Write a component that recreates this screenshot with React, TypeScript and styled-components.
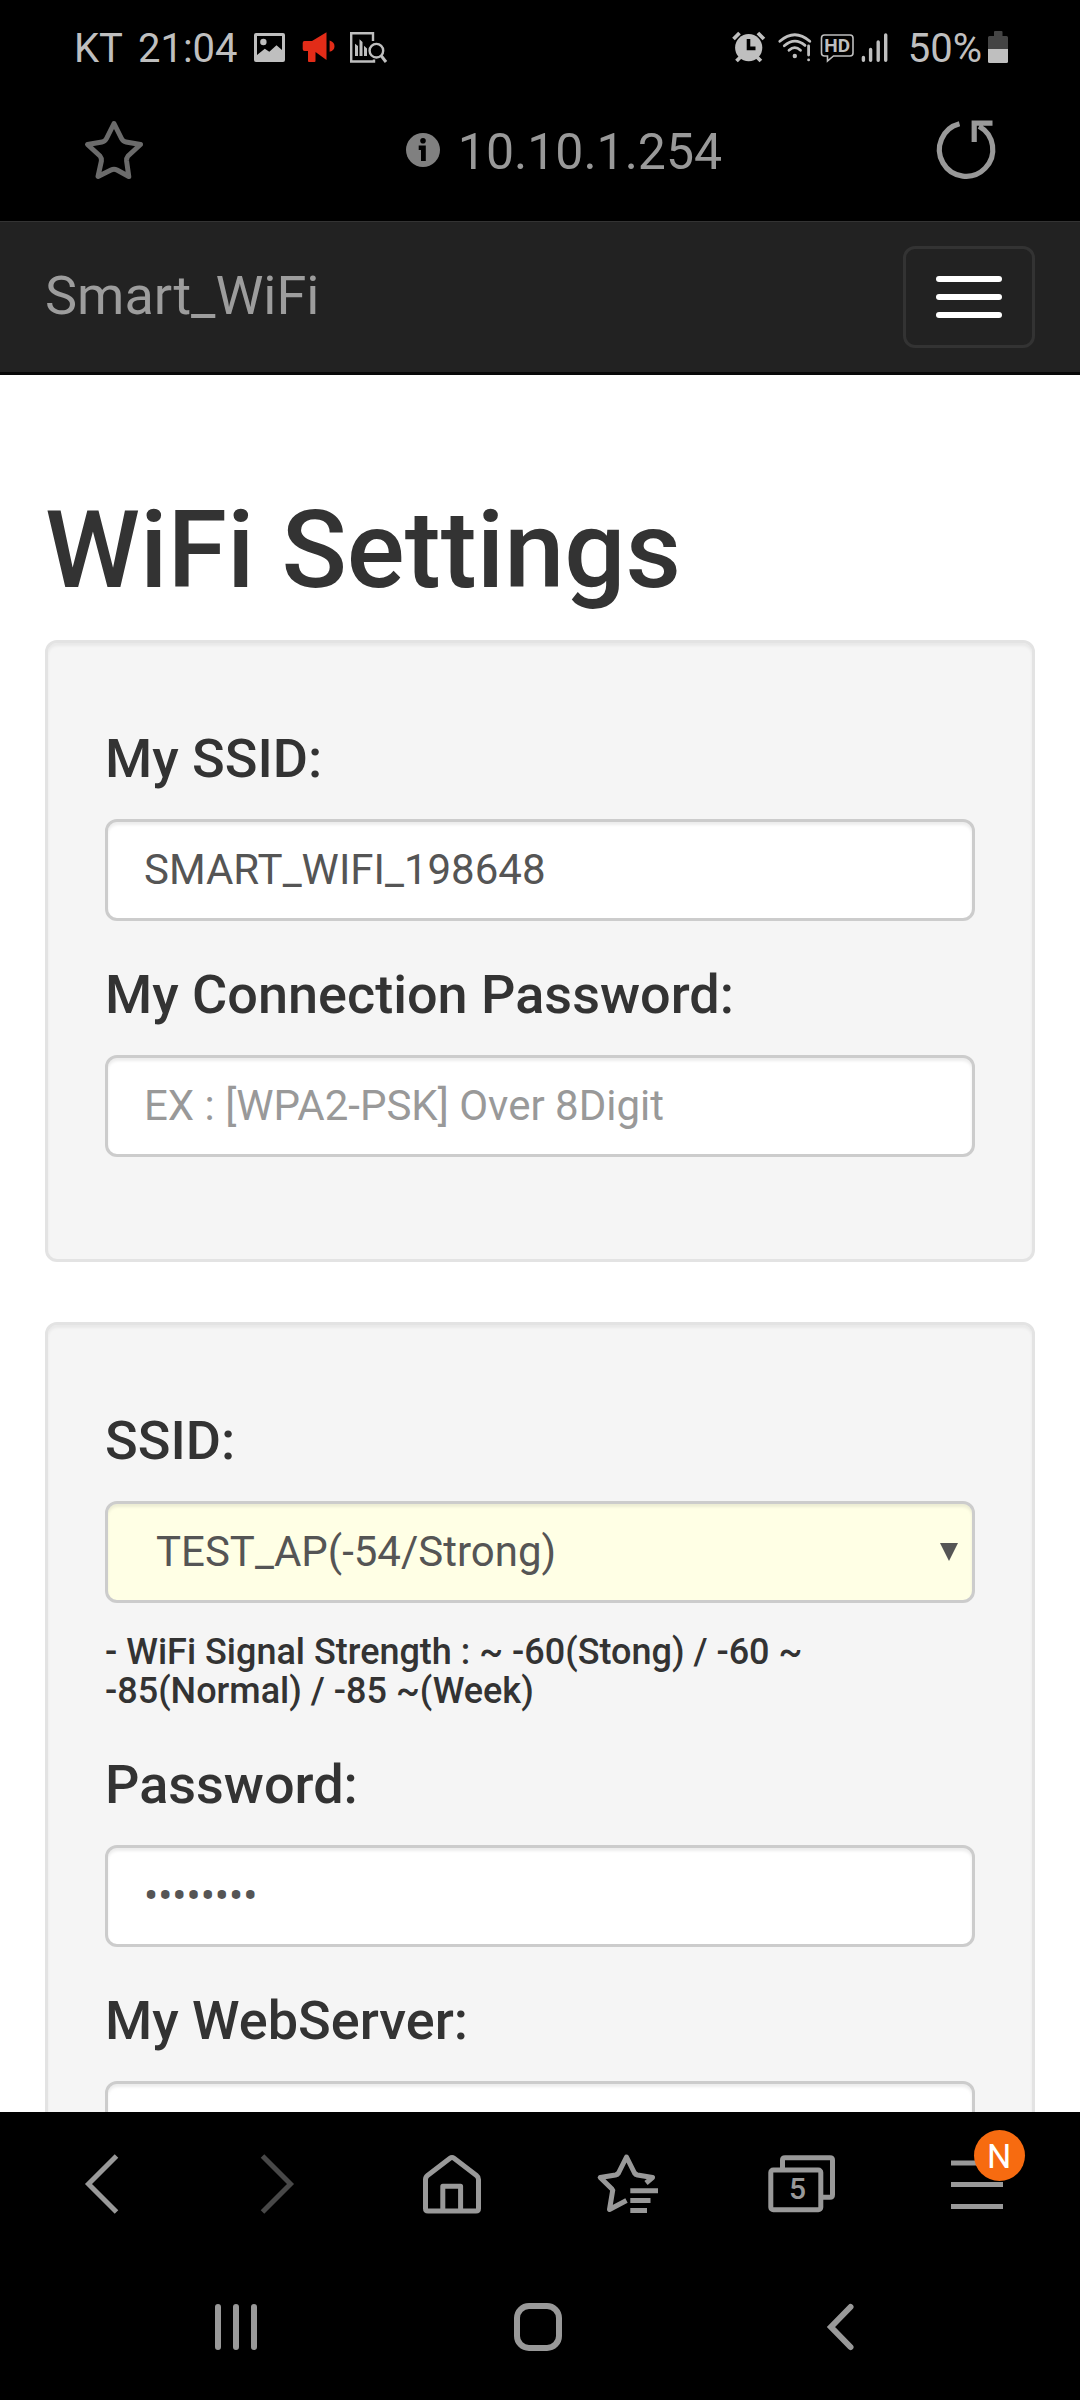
import React, { useState } from "react";
import styled, { createGlobalStyle } from "styled-components";

const GlobalStyle = createGlobalStyle`
  *, *::before, *::after { box-sizing: border-box; }
  body {
    margin: 0;
    background: #000;
    font-family: Roboto, "Noto Sans", sans-serif;
  }
  button, input, select { font-family: inherit; }
`;

const Screen = styled.div`
  display: flex;
  flex-direction: column;
  height: 100vh;
  background: #000;
`;

/* ---------- phone status bar ---------- */

const StatusBar = styled.header`
  display: flex;
  flex: none;
  justify-content: space-between;
  align-items: center;
  height: 94px;
  padding: 0 72px 0 74px;
  color: #bfbfbf;
`;

const StatusGroup = styled.div<{ $gap: number }>`
  display: flex;
  align-items: center;
  gap: ${(p) => p.$gap}px;
`;

const StatusText = styled.span`
  padding-top: 4px;
  font-size: 40px;
  line-height: 46px;
`;

const Icon = styled.svg`
  display: block;
  flex: none;
  overflow: visible;
  fill: none;
`;

/* ---------- address bar ---------- */

const AddressBar = styled.div`
  display: flex;
  flex: none;
  align-items: center;
  height: 127px;
  padding: 0 83px 15px 85px;
`;

const Address = styled.div`
  display: flex;
  flex: 1;
  align-items: center;
  justify-content: center;
  gap: 18px;
  padding-left: 48px;
  color: #999;
`;

const AddressText = styled.span`
  padding-top: 4px;
  font-size: 50px;
  line-height: 60px;
`;

const IconButton = styled.button<{ $color?: string }>`
  display: block;
  position: relative;
  padding: 0;
  border: 0;
  background: none;
  color: ${(p) => p.$color ?? "#999"};
  cursor: pointer;
`;

/* ---------- web page ---------- */

const Page = styled.div`
  flex: 1;
  min-height: 0;
  overflow-y: auto;
  scrollbar-width: none;
  background: #fff;
  color: #333;
`;

const Navbar = styled.nav`
  display: flex;
  align-items: center;
  justify-content: space-between;
  padding: 24px 45px;
  border-top: 1px solid #333;
  border-bottom: 3px solid #080808;
  background: #222;
`;

const Brand = styled.a`
  padding-bottom: 2px;
  color: #9d9d9d;
  font-size: 54px;
  line-height: 60px;
  text-decoration: none;
`;

const Toggle = styled.button`
  display: flex;
  flex-direction: column;
  justify-content: center;
  gap: 12px;
  height: 102px;
  padding: 0 30px;
  border: 3px solid #333;
  border-radius: 12px;
  background: transparent;
  cursor: pointer;
`;

const ToggleBar = styled.span`
  width: 66px;
  height: 6px;
  border-radius: 3px;
  background: #fff;
`;

const Container = styled.main`
  padding: 116px 45px 60px;
`;

const Title = styled.h1`
  margin: 0 0 30px;
  font-size: 108px;
  font-weight: 500;
  line-height: 119px;
`;

const Well = styled.section`
  margin-bottom: 60px;
  padding: 87px 57px 57px;
  border: 3px solid #e3e3e3;
  border-radius: 12px;
  background: #f5f5f5;
  box-shadow: inset 0 3px 3px rgba(0, 0, 0, 0.05);
`;

const Field = styled.div`
  margin-bottom: 45px;
`;

const FieldLabel = styled.label`
  display: block;
  margin-bottom: 32px;
  font-size: 54px;
  font-weight: 500;
  line-height: 57px;
`;

const TextInput = styled.input`
  display: block;
  width: 100%;
  height: 102px;
  padding: 17px 36px 19px;
  border: 3px solid #ccc;
  border-radius: 12px;
  outline: none;
  background: #fff;
  box-shadow: inset 0 3px 3px rgba(0, 0, 0, 0.075);
  color: #555;
  font-size: 42px;
  line-height: 60px;

  &::placeholder {
    color: #999;
    opacity: 1;
  }
`;

const SelectWrap = styled.div`
  position: relative;
`;

const Select = styled.select`
  display: block;
  width: 100%;
  height: 102px;
  padding: 18px 48px;
  border: 3px solid #ccc;
  border-radius: 12px;
  outline: none;
  appearance: none;
  background: #ffffe5;
  box-shadow: inset 0 3px 3px rgba(0, 0, 0, 0.075);
  color: #555;
  font-size: 42px;
  line-height: 60px;
`;

const SelectArrow = styled.svg`
  position: absolute;
  top: 42px;
  right: 17px;
  pointer-events: none;
`;

const Hint = styled.p`
  margin: 30px 0 0;
  font-size: 36px;
  font-weight: 500;
  line-height: 39px;
`;

/* ---------- bottom bars ---------- */

const Toolbar = styled.nav`
  display: grid;
  flex: none;
  grid-template-columns: repeat(6, 1fr);
  place-items: center;
  height: 144px;
  padding: 0 16px 0 15px;
`;

const Badge = styled.span`
  position: absolute;
  top: -24px;
  left: 23px;
  width: 51px;
  height: 51px;
  border-radius: 50%;
  background: #f76b10;
  color: #fff;
  font-size: 34px;
  line-height: 52px;
  text-align: center;
`;

const SystemNav = styled.nav`
  display: grid;
  flex: none;
  grid-template-columns: repeat(3, 1fr);
  place-items: center;
  height: 144px;
  padding: 0 89px 2px 85px;
`;

/* ---------- drawings ---------- */

const PictureIcon = () => (
  <Icon width="34" height="33" viewBox="0 0 34 33">
    <path
      fill="currentColor"
      fillRule="evenodd"
      d="M3 2H30Q32 2 32 4V29Q32 31 30 31H3Q1 31 1 29V4Q1 2 3 2ZM4 5V24L11.8 17.7 16.3 20.7 23.5 14.3 29 19V5Z"
    />
    <circle cx="10.4" cy="11" r="3.2" fill="currentColor" />
  </Icon>
);

const MegaphoneIcon = () => (
  <Icon width="33" height="33" viewBox="0 0 33 33">
    <path
      fill="#e22c18"
      d="M2.5 10H10L24.5 1.3V29L13.5 21V30q0 1-1 1H7q-1 0-1-1V20H2.5Q.7 20 .7 18V12Q.7 10 2.5 10ZM27.6 9.5Q32.5 11 32.5 15.2T27.6 20.7Z"
    />
  </Icon>
);

const ReportIcon = () => (
  <Icon width="37" height="33" viewBox="0 0 37 33">
    <path d="M23 10V2.2H1.2V30.5H24V28.5" stroke="currentColor" strokeWidth="2.4" />
    <path fill="currentColor" d="M5 12.7L8 15V25H5ZM9.5 8.3L12.5 11V25H9.5ZM14 14.7L17 17.5V25H14Z" />
    <circle cx="26.4" cy="19.7" r="6.8" stroke="currentColor" strokeWidth="2.4" />
    <path d="M31 24.5L36 31" stroke="currentColor" strokeWidth="3" />
  </Icon>
);

const AlarmIcon = () => (
  <Icon width="40" height="33" viewBox="0 0 40 33">
    <path d="M1.5 8L7.5 2M25.9 2L31.9 8M4.5 30L9 25.5M28.9 30L24.4 25.5" stroke="currentColor" strokeWidth="3.8" />
    <circle cx="16.7" cy="16.7" r="13.6" fill="currentColor" />
    <path d="M16.5 8V17.4H23.5" stroke="#000" strokeWidth="3.6" />
  </Icon>
);

const WifiIcon = () => (
  <Icon width="36" height="33" viewBox="0 0 36 33" stroke="currentColor" strokeWidth="2.8" strokeLinecap="round">
    <path d="M1.8 10.3Q16.8-2.7 31.8 10.3M6.3 14.8Q16.8 5.7 27 14.4M11 19.3Q16.8 14 22.5 19.3M30.6 15V24M30.6 28.8V28.9" />
    <circle cx="16.8" cy="25" r="2.2" fill="currentColor" stroke="none" />
  </Icon>
);

const HdIcon = () => (
  <Icon width="36" height="33" viewBox="0 0 36 33">
    <path
      d="M4.5 4H30Q33 4 33 7V22Q33 25 30 25H13.5L7.5 30V25H4.5Q1.5 25 1.5 22V7Q1.5 4 4.5 4Z"
      stroke="currentColor"
      strokeWidth="1.6"
    />
    <text x="17.2" y="21.3" textAnchor="middle" fill="currentColor" fontSize="19" fontWeight="700">
      HD
    </text>
  </Icon>
);

const SignalIcon = () => (
  <Icon width="40" height="33" viewBox="0 0 40 33" stroke="currentColor" strokeWidth="3.4" strokeLinecap="round">
    <path d="M1.4 26.5V29.2M8.6 18.5V29.2M16.2 11V29.2M23.7 4V29.2" />
  </Icon>
);

const BatteryIcon = () => (
  <Icon width="20" height="33" viewBox="0 0 20 33">
    <path fill="#444" d="M7 0H13.5Q14.5 0 14.5 1V5H18.5Q20 5 20 6.5V18H0V6.5Q0 5 1.5 5H6V1Q6 0 7 0Z" />
    <path fill="currentColor" d="M0 18H20V30.5Q20 32 18.5 32H1.5Q0 32 0 30.5Z" />
  </Icon>
);

const StarIcon = () => (
  <Icon width="58" height="60" viewBox="0 0 58 60" stroke="currentColor" strokeWidth="5" strokeLinejoin="round">
    <path d="M29 3.5L36.5 18.5Q38 21.5 41 22L55.5 24.5 43 36Q41.3 38 41.6 41L43.8 56.5 32 50Q29 48.5 26 50L13 56.5 16.4 41Q16.7 38 15 36L2.5 24.5 17 22Q20 21.5 21.5 18.5Z" />
  </Icon>
);

const InfoIcon = () => (
  <Icon width="34" height="34" viewBox="0 0 34 34">
    <circle cx="17" cy="17" r="17" fill="#808080" />
    <circle cx="17" cy="7.8" r="2.8" fill="#000" />
    <path fill="#000" d="M12.7 12.6H19.8V28H15V17H12.7Z" />
  </Icon>
);

const ReloadIcon = () => (
  <Icon width="60" height="60" viewBox="0 0 60 60" stroke="currentColor" strokeWidth="5.2">
    <path d="M22.5 3.7A26.7 26.7 0 1 0 42 6.2M37.2 22V3.2H55.5" />
  </Icon>
);

const ChevronIcon = ({ flip = false }: { flip?: boolean }) => (
  <Icon width="36" height="60" viewBox="0 0 36 60" stroke="currentColor" strokeWidth="5">
    <path d={flip ? "M3.5 2L31.5 30 3.5 58" : "M32.5 2L4.5 30 32.5 58"} />
  </Icon>
);

const HouseIcon = () => (
  <Icon width="60" height="60" viewBox="0 0 60 60" stroke="currentColor" strokeWidth="5">
    <path d="M3.5 25.5Q3.5 23 5.5 21.5L28 4.3Q30 2.8 32 4.3L54.5 21.5Q56.5 23 56.5 25.5V54.5Q56.5 57 54 57H6Q3.5 57 3.5 54.5Z" />
    <path d="M20.8 57V32.2H38.6V57" strokeLinejoin="round" />
  </Icon>
);

const BookmarksIcon = () => (
  <Icon width="62" height="60" viewBox="-1 0 62 60" stroke="currentColor" strokeWidth="5">
    <path
      strokeLinejoin="round"
      d="M29.5 46.5L12.5 55.5 15.5 37.5Q16 36 15 35L3.2 23.5 18.5 21Q20.5 20.5 21.5 19L29.5 3 37.5 19Q38.5 20.5 40.5 21L55.5 23.5 49 29"
    />
    <path d="M33.3 36.7H61M33.3 46.5H53.5M33.3 56.5H50" />
  </Icon>
);

const TabsIcon = () => (
  <Icon width="68" height="58" viewBox="0 0 68 58" stroke="currentColor" strokeWidth="5">
    <rect x="2.8" y="15" width="50" height="39.7" rx="2.5" />
    <path d="M14.5 13V5Q14.5 2.7 17 2.7H62Q64.5 2.7 64.5 5V39.7Q64.5 42.2 62 42.2H55" />
    <text x="29.5" y="44.3" textAnchor="middle" fill="currentColor" stroke="none" fontSize="30" fontWeight="500">
      5
    </text>
  </Icon>
);

const MenuIcon = () => (
  <Icon width="52" height="60" viewBox="0 0 52 60" stroke="currentColor" strokeWidth="5">
    <path d="M0 9H52M0 30.5H52M0 52.5H52" />
  </Icon>
);

const RecentsIcon = () => (
  <Icon width="42" height="48" viewBox="0 0 42 48" stroke="currentColor" strokeWidth="6" strokeLinecap="round">
    <path d="M3 4V44M21 4V44M39 4V44" />
  </Icon>
);

const HomeKeyIcon = () => (
  <Icon width="48" height="48" viewBox="0 0 48 48" stroke="currentColor" strokeWidth="6">
    <rect x="3" y="3" width="42" height="42" rx="12" />
  </Icon>
);

const BackKeyIcon = () => (
  <Icon width="28" height="48" viewBox="0 0 28 48" stroke="currentColor" strokeWidth="6" strokeLinecap="round">
    <path d="M24.5 4L5 24 24.5 44" />
  </Icon>
);

export default function App() {
  const [mySsid, setMySsid] = useState("SMART_WIFI_198648");
  const [myPassword, setMyPassword] = useState("");
  const [password, setPassword] = useState("12345678");
  const [server, setServer] = useState("");

  return (
    <Screen>
      <GlobalStyle />
      <StatusBar>
        <StatusGroup $gap={15}>
          <StatusText>KT</StatusText>
          <StatusText as="time">21:04</StatusText>
          <PictureIcon />
          <MegaphoneIcon />
          <ReportIcon />
        </StatusGroup>
        <StatusGroup $gap={6}>
          <AlarmIcon />
          <WifiIcon />
          <HdIcon />
          <SignalIcon />
          <StatusText>50%</StatusText>
          <BatteryIcon />
        </StatusGroup>
      </StatusBar>

      <AddressBar>
        <IconButton aria-label="Bookmark" $color="#6b6b6b">
          <StarIcon />
        </IconButton>
        <Address>
          <InfoIcon />
          <AddressText>10.10.1.254</AddressText>
        </Address>
        <IconButton aria-label="Reload">
          <ReloadIcon />
        </IconButton>
      </AddressBar>

      <Page>
        <Navbar>
          <Brand href="#">Smart_WiFi</Brand>
          <Toggle aria-label="Toggle navigation">
            <ToggleBar />
            <ToggleBar />
            <ToggleBar />
          </Toggle>
        </Navbar>

        <Container>
          <Title>WiFi Settings</Title>
          <Well>
            <Field>
              <FieldLabel htmlFor="my-ssid">My SSID:</FieldLabel>
              <TextInput id="my-ssid" value={mySsid} onChange={(e) => setMySsid(e.target.value)} />
            </Field>
            <Field>
              <FieldLabel htmlFor="my-password">My Connection Password:</FieldLabel>
              <TextInput
                id="my-password"
                placeholder="EX : [WPA2-PSK] Over 8Digit"
                value={myPassword}
                onChange={(e) => setMyPassword(e.target.value)}
              />
            </Field>
          </Well>
          <Well>
            <Field>
              <FieldLabel htmlFor="ssid">SSID:</FieldLabel>
              <SelectWrap>
                <Select id="ssid">
                  <option>TEST_AP(-54/Strong)</option>
                </Select>
                <SelectArrow width="18" height="18" viewBox="0 0 18 18">
                  <path fill="#555" d="M0 0H18L9 18Z" />
                </SelectArrow>
              </SelectWrap>
              <Hint>- WiFi Signal Strength : ~ -60(Stong) / -60 ~ -85(Normal) / -85 ~(Week)</Hint>
            </Field>
            <Field>
              <FieldLabel htmlFor="password">Password:</FieldLabel>
              <TextInput
                id="password"
                type="password"
                value={password}
                onChange={(e) => setPassword(e.target.value)}
              />
            </Field>
            <Field>
              <FieldLabel htmlFor="server">My WebServer:</FieldLabel>
              <TextInput id="server" value={server} onChange={(e) => setServer(e.target.value)} />
            </Field>
          </Well>
        </Container>
      </Page>

      <Toolbar aria-label="Browser">
        <IconButton aria-label="Back">
          <ChevronIcon />
        </IconButton>
        <IconButton aria-label="Forward" $color="#484848">
          <ChevronIcon flip />
        </IconButton>
        <IconButton aria-label="Homepage">
          <HouseIcon />
        </IconButton>
        <IconButton aria-label="Bookmarks">
          <BookmarksIcon />
        </IconButton>
        <IconButton aria-label="Tabs">
          <TabsIcon />
        </IconButton>
        <IconButton aria-label="Menu">
          <MenuIcon />
          <Badge>N</Badge>
        </IconButton>
      </Toolbar>
      <SystemNav aria-label="System">
        <IconButton aria-label="Recent apps">
          <RecentsIcon />
        </IconButton>
        <IconButton aria-label="Home">
          <HomeKeyIcon />
        </IconButton>
        <IconButton aria-label="Go back">
          <BackKeyIcon />
        </IconButton>
      </SystemNav>
    </Screen>
  );
}
